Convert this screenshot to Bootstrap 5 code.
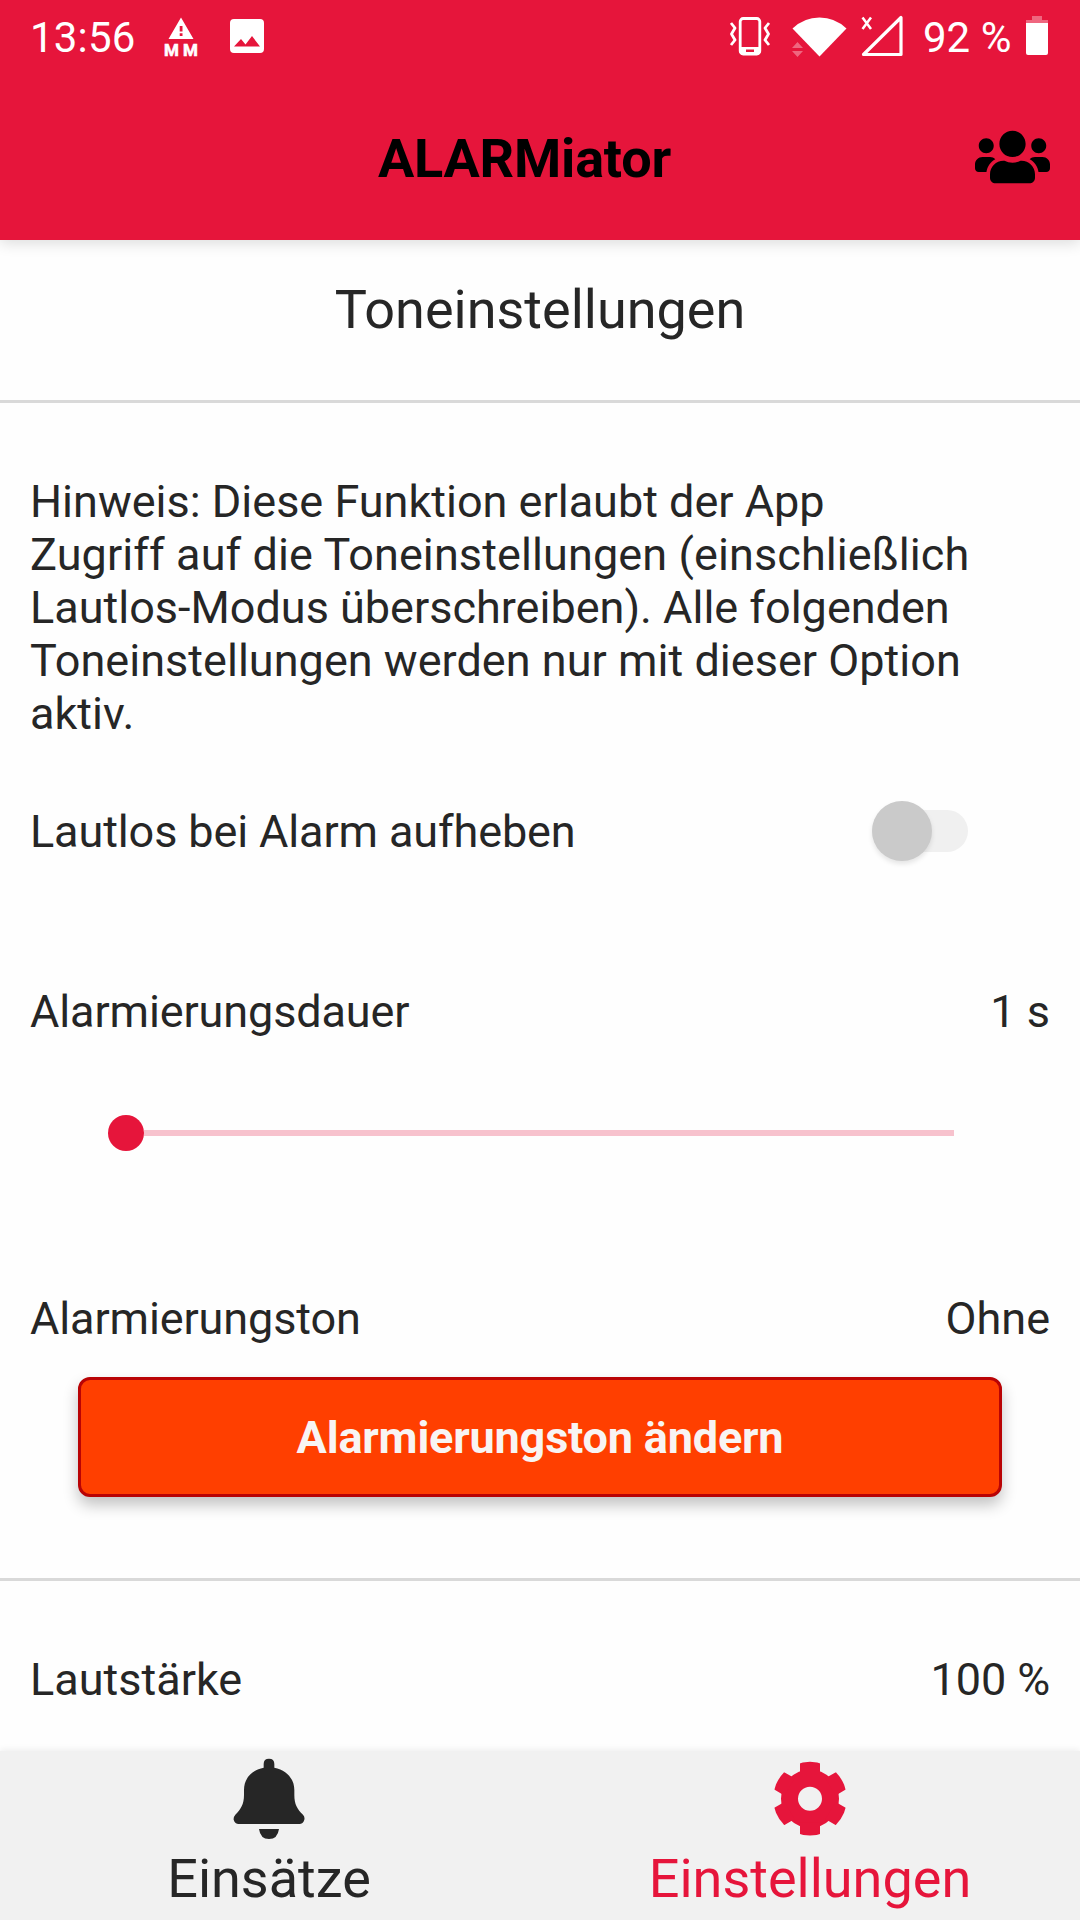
<!DOCTYPE html>
<html lang="de">
<head>
<meta charset="utf-8">
<meta name="viewport" content="width=device-width, initial-scale=1">
<title>ALARMiator</title>
<link href="https://cdn.jsdelivr.net/npm/bootstrap@5.3.0/dist/css/bootstrap.min.css" rel="stylesheet">
<style>
  :root { --brand: #e6153b; --ink: #262626; }
  body { font-family: Roboto, sans-serif; font-size: 45px; line-height: 53px; color: var(--ink); background: #fefefe; }
  .screen { width: 1080px; height: 1920px; }
  .app-head { height: 240px; background: var(--brand); box-shadow: 0 3px 14px rgba(0,0,0,.14); z-index: 2; }
  .status { height: 72px; padding: 0 31px 0 30px; font-size: 42px; line-height: 49px; color: #fff; }
  .status svg { height: 72px; display: block; flex: none; }
  .status .clock { width: 132px; padding-top: 13px; letter-spacing: .2px; }
  .status .charge { padding-top: 13px; width: 103px; margin-left: 17px; }
  .title-row { height: 168px; padding: 0 30px; color: #000; }
  .app-title { font-size: 54px; line-height: 64px; font-weight: 700; padding-left: 44px; margin-top: 5px; letter-spacing: -.2px; }
  .people { width: 75px; height: 60px; margin-top: 1px; }
  .page-title { font-size: 54px; line-height: 64px; height: 160px; padding-top: 38px; }
  .rule { height: 3px; background: #d9d9d9; }
  .px { padding-left: 30px; padding-right: 30px; }
  .hint { margin-top: 72px; width: 1000px; }
  .loose { letter-spacing: .1px; }
  .loose-sm { letter-spacing: .03px; }
  .label { letter-spacing: -.12px; }
  .switch-row { margin-top: 51px; height: 80px; padding-right: 112px; }
  .form-switch .toggle { width: 96px; height: 42px; border-radius: 21px; background: #f0f0f0; }
  .knob { width: 60px; height: 60px; background: #cacaca; border-radius: 50%; box-shadow: 0 3px 5px rgba(0,0,0,.1); flex: none; }
  .dur-row { margin-top: 114px; }
  .slider { margin: 77px 126px 0 108px; height: 36px; }
  .slider-dot { width: 36px; height: 36px; border-radius: 50%; background: var(--brand); }
  .slider-line { height: 6px; background: #f7c2cd; }
  .tone-row { margin-top: 141px; }
  .btn-tone { height: 120px; margin: 32px 78px 0; border: 3px solid #b90305; border-radius: 12px; background: #ff3f00; color: #f8f4f3; font-size: 45px; line-height: 53px; font-weight: 700; letter-spacing: -.18px; padding: 0; box-shadow: 0 8px 15px rgba(0,0,0,.24); }
  .btn-tone:hover { background: #ff3f00; color: #f8f4f3; }
  .rule-low { margin-top: 81px; }
  .vol-row { margin-top: 72px; }
  .tabs { height: 169px; background: #f1f1f1; box-shadow: 0 -2px 6px rgba(0,0,0,.06); font-size: 54px; line-height: 64px; z-index: 2; }
  .tabs a { color: var(--ink); text-decoration: none; }
  .tabs a:first-child { padding-right: 2px; }
  .tabs a.current { color: var(--brand); }
  .tabs svg { width: 110px; height: 96px; display: block; }
</style>
</head>
<body>
<div class="screen d-flex flex-column overflow-hidden">
  <header class="app-head position-relative flex-shrink-0">
    <div class="status d-flex align-items-start">
      <span class="clock">13:56</span>
      <svg width="38" viewBox="162 0 38 72" fill="#fff">
        <path fill-rule="evenodd" d="M181 17.5 193.5 39H168.5ZM179.7 26h2.8v5.500h-2.800ZM179.700 33.200h2.800v2.800h-2.800Z"/>
        <text x="164" y="55.700" font-family="Roboto, sans-serif" font-weight="700" font-size="17" textLength="34" stroke="#fff" stroke-width=".6">MM</text>
      </svg>
      <svg class="ms-4" width="44" viewBox="224 0 44 72" fill="#fff">
        <path fill-rule="evenodd" d="M234 19H260Q264 19 264 23V49Q264 53 260 53H234Q230 53 230 49V23Q230 19 234 19ZM234 46.500H260L252 36 245.500 44.500 241 39Z"/>
      </svg>
      <svg class="ms-auto" width="48" viewBox="726 0 48 72" fill="none" stroke="#fff" stroke-width="2.800">
        <rect x="740.200" y="18.500" width="19.600" height="35.500" rx="3"/>
        <path fill="#fff" stroke="none" fill-rule="evenodd" d="M740 47H760V52Q760 55 757 55H743Q740 55 740 52ZM746 49.500h8v2.500h-8Z"/>
        <path d="M731 23 735 28 731.500 34 735 40 731 45M769 23 765 28 768.500 34 765 40 769 45" stroke-linejoin="round"/>
      </svg>
      <svg width="80" viewBox="774 0 80 72" fill="#fff">
        <path d="M792.500 28.500Q804 17.500 819.500 17.500T846.500 28.500L819.500 56.500Z"/>
        <path d="M797.500 42 803 48H792ZM797.500 57 803 51H792Z" opacity=".35"/>
      </svg>
      <svg width="52" viewBox="854 0 52 72" fill="none" stroke="#fff">
        <path d="M901 17.500V54.500H863.500Z" stroke-width="3.200" stroke-linejoin="round"/>
        <path d="M862.500 17.500 871 29M871 17.500 862.500 29" stroke-width="2.500"/>
      </svg>
      <span class="charge text-nowrap">92 %</span>
      <svg width="23" viewBox="1026 0 23 72" fill="#fff">
        <path d="M1032 16h10v4h6v4h-22v-4h6Z" opacity=".35"/>
        <path d="M1026 23h22v30q0 2-2 2h-18q-2 0-2-2Z"/>
      </svg>
    </div>
    <div class="title-row d-flex align-items-center">
      <div class="app-title flex-fill text-center">ALARMiator</div>
      <svg class="people" viewBox="0 0 640 512"><path d="M96 224c35.300 0 64-28.700 64-64s-28.700-64-64-64-64 28.700-64 64 28.700 64 64 64zm448 0c35.300 0 64-28.700 64-64s-28.700-64-64-64-64 28.700-64 64 28.700 64 64 64zm32 32h-64c-17.600 0-33.500 7.100-45.100 18.600 40.300 22.100 68.900 62 75.100 109.400h66c17.700 0 32-14.300 32-32v-32c0-35.300-28.700-64-64-64zm-256 0c61.900 0 112-50.100 112-112S381.900 32 320 32 208 82.100 208 144s50.100 112 112 112zm76.800 32h-8.300c-20.800 10-43.900 16-68.500 16s-47.600-6-68.500-16h-8.300C179.600 288 128 339.600 128 403.200V432c0 26.500 21.500 48 48 48h288c26.500 0 48-21.500 48-48v-28.800c0-63.600-51.600-115.200-115.200-115.200zm-223.700-13.400C161.500 263.100 145.600 256 128 256H64c-35.300 0-64 28.700-64 64v32c0 17.700 14.300 32 32 32h65.900c6.300-47.400 34.900-87.300 75.200-109.400z"/></svg>
    </div>
  </header>

  <main class="flex-fill overflow-hidden d-flex flex-column">
    <div class="page-title text-center flex-shrink-0">Toneinstellungen</div>
    <div class="rule flex-shrink-0"></div>
    <p class="hint px mb-0">Hinweis: Diese Funktion erlaubt der App<br><span class="loose">Zugriff auf die Toneinstellungen (einschließlich</span><br>Lautlos-Modus überschreiben). Alle folgenden<br><span class="loose-sm">Toneinstellungen werden nur mit dieser Option</span><br>aktiv.</p>
    <div class="switch-row px d-flex justify-content-between align-items-center form-switch">
      <span class="label">Lautlos bei Alarm aufheben</span>
      <span class="toggle d-flex align-items-center" role="switch" aria-checked="false"><span class="knob"></span></span>
    </div>
    <div class="dur-row px d-flex justify-content-between"><span class="label">Alarmierungsdauer</span><span>1 s</span></div>
    <div class="slider d-flex align-items-center"><span class="slider-dot flex-shrink-0"></span><span class="slider-line flex-fill"></span></div>
    <div class="tone-row px d-flex justify-content-between"><span class="label">Alarmierungston</span><span>Ohne</span></div>
    <button type="button" class="btn btn-tone flex-shrink-0">Alarmierungston ändern</button>
    <div class="rule rule-low flex-shrink-0"></div>
    <div class="vol-row px d-flex justify-content-between"><span>Lautstärke</span><span class="label">100 %</span></div>
  </main>

  <nav class="tabs d-flex position-relative flex-shrink-0">
    <a href="#" class="w-50 d-flex flex-column align-items-center">
      <svg viewBox="223 48 330 288" fill="#262626"><path d="M372 98V87Q372 71 388 71T404 87V98C442 106 464 132 464 165V180C464 208 473 223 490 239Q496 246 494 254 490 267 479 267H297Q286 267 282 254 281 246 287 239C303 223 313 208 313 180V165C313 132 334 106 372 98ZM358 282H418Q414 312 388 312T358 282Z"/></svg>
      <span>Einsätze</span>
    </a>
    <a href="#" class="current w-50 d-flex flex-column align-items-center">
      <svg viewBox="405 48 330 288" fill="#e6153b">
        <defs><clipPath id="gearRim"><circle cx="570" cy="191" r="110.500"/></clipPath></defs>
        <circle cx="570" cy="191" r="61.500" fill="none" stroke="#e6153b" stroke-width="51"/>
        <g clip-path="url(#gearRim)">
          <path id="tooth" d="M540 75H600V115L610 120H530L540 115Z"/>
          <use href="#tooth" transform="rotate(60 570 191)"/><use href="#tooth" transform="rotate(120 570 191)"/><use href="#tooth" transform="rotate(180 570 191)"/><use href="#tooth" transform="rotate(240 570 191)"/><use href="#tooth" transform="rotate(300 570 191)"/>
        </g>
      </svg>
      <span>Einstellungen</span>
    </a>
  </nav>
</div>
<script src="https://cdn.jsdelivr.net/npm/bootstrap@5.3.0/dist/js/bootstrap.bundle.min.js"></script>
</body>
</html>
